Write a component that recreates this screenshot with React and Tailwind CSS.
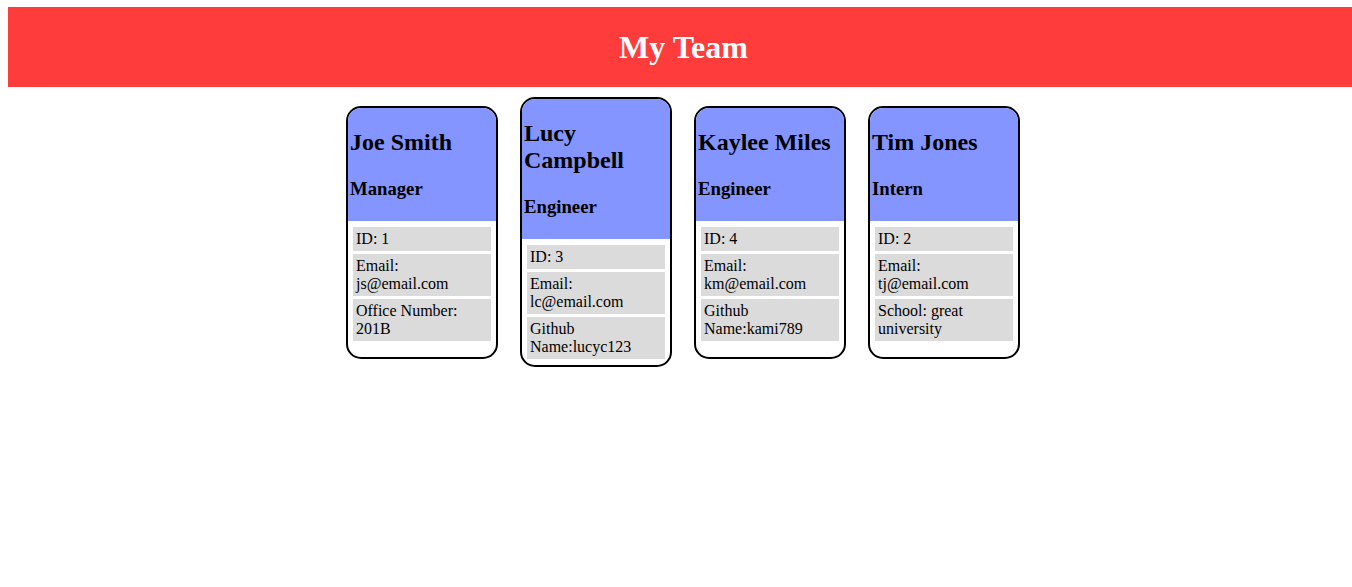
import React from "react";

const team = [
  { name: "Joe Smith", role: "Manager", id: 1, email: "js@email.com", extra: "Office Number: 201B" },
  { name: "Lucy Campbell", role: "Engineer", id: 3, email: "lc@email.com", extra: "Github Name:lucyc123" },
  { name: "Kaylee Miles", role: "Engineer", id: 4, email: "km@email.com", extra: "Github Name:kami789" },
  { name: "Tim Jones", role: "Intern", id: 2, email: "tj@email.com", extra: "School: great university" },
];

const Card = ({ member }) => (
  <div className="w-[152px] min-h-[253px] border-2 border-black rounded-[15px] overflow-hidden bg-white">
    <div className="bg-[#8495ff] pl-[2px] pr-[2px] pt-[21px] pb-[22px]">
      <h2 className="text-[24px] leading-[27px] font-bold">{member.name}</h2>
      <h3 className="mt-[22px] text-[18.72px] leading-[21px] font-bold">{member.role}</h3>
    </div>
    <ul className="flex flex-col gap-[3px] px-[5px] pt-[6px] pb-[6px] text-[16px] leading-[18px]">
      <li className="bg-[#dbdbdb] p-[3px]">ID: {member.id}</li>
      <li className="bg-[#dbdbdb] p-[3px]">Email: {member.email}</li>
      <li className="bg-[#dbdbdb] p-[3px]">{member.extra}</li>
    </ul>
  </div>
);

export default function App() {
  return (
    <div className="min-h-screen bg-white text-black font-['Liberation_Serif',_serif] overflow-hidden">
      <header className="ml-[8px] mt-[7px] h-[80px] flex items-center justify-center pl-[7px] bg-[#ff3c3c]">
        <h1 className="text-[32px] leading-[35px] font-bold text-white">My Team</h1>
      </header>
      <main className="ml-[8px] pl-[6px] mt-[10px] flex justify-center items-center gap-[22px]">
        {team.map((member) => (
          <Card key={member.id} member={member} />
        ))}
      </main>
    </div>
  );
}
